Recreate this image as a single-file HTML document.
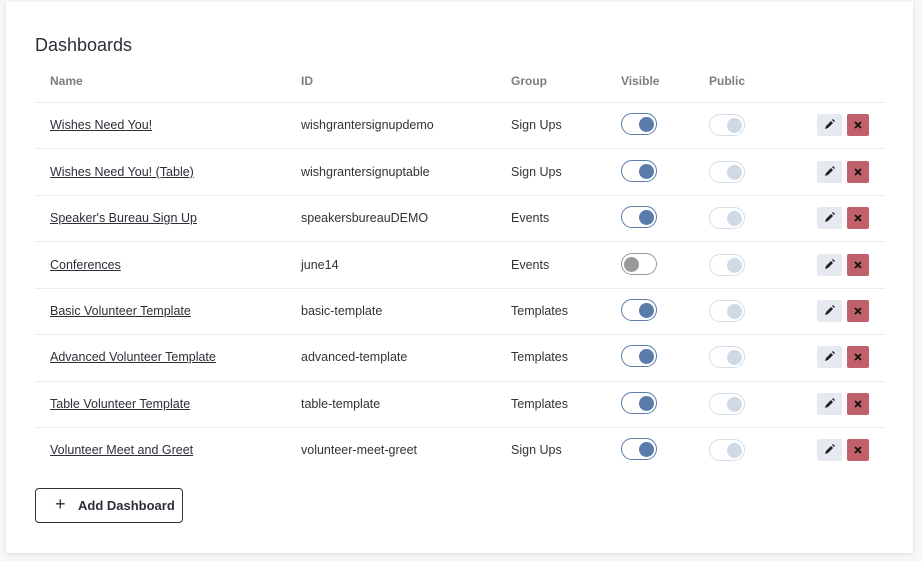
<!DOCTYPE html>
<html><head><style>
body{margin:0;background:#f7f7f7;width:922px;height:561px;overflow:hidden;font-family:"Liberation Sans",sans-serif;}
.card{position:absolute;left:6px;top:2px;width:907px;height:551px;background:#fff;box-shadow:0 1px 4px rgba(0,0,0,.12);}
.ov{background:transparent;box-shadow:none}
h1{position:absolute;left:29px;top:33px;margin:0;font-weight:normal;font-size:18px;color:#2b2f36;}
.hdr{position:absolute;top:72px;font-size:12px;font-weight:bold;color:#7a7d82;}
.line{position:absolute;left:29px;width:850px;height:1px;background:#ececec;}
.cell{position:absolute;font-size:12.5px;color:#333;margin-top:1px}
.name{color:#2b2f36;text-decoration:underline;}
.tg{position:absolute;width:36px;height:22px;border-radius:11px;box-sizing:border-box;margin-top:-1px}
.tg i{position:absolute;top:3px;width:15px;height:15px;border-radius:50%;}
.on{border:1.5px solid #5b7caa;}.on i{right:2px;background:#5b7caa;}
.off{border:1.5px solid #999;}.off i{left:2px;background:#999;}
.pub{border:1.5px solid #d5dde8;}.pub i{right:2px;background:#d0dae5;}
.ed{position:absolute;width:25px;height:22px;background:#e6e9ef;border-radius:2px;}
.dl{position:absolute;width:22px;height:22px;background:#c0606a;border-radius:2px;}
.btn{position:absolute;left:29px;top:486px;width:148px;height:35px;border:1px solid #333;border-radius:4px;box-sizing:border-box;font-size:13px;font-weight:bold;color:#2b2f36;line-height:33px;}
</style></head><body>
<div class="card">
<h1>Dashboards</h1>
<div class="hdr" style="left:44px">Name</div>
<div class="hdr" style="left:295px">ID</div>
<div class="hdr" style="left:505px">Group</div>
<div class="hdr" style="left:615px">Visible</div>
<div class="hdr" style="left:703px">Public</div>
<div class="btn"><span style="position:absolute;left:19px;font-size:18px;font-weight:normal;top:-1px">+</span><span style="position:absolute;left:42px">Add Dashboard</span></div>
</div>
<div class="card ov">
<div class="line" style="top:100px"></div>
<div class="cell name" style="left:44px;top:115px">Wishes Need You!</div><div class="cell" style="left:295px;top:115px">wishgrantersignupdemo</div><div class="cell" style="left:505px;top:115px">Sign Ups</div>
<div class="tg on" style="left:615px;top:112px"><i></i></div><div class="tg pub" style="left:703px;top:113px"><i></i></div>
<div class="ed" style="left:811px;top:112px"><svg width="25" height="22"><path d="M8 15l1-3 5-5 2 2-5 5z M15 6l1-1 2 2-1 1z" fill="#222"/></svg></div><div class="dl" style="left:841px;top:112px"><svg width="22" height="22"><path d="M8 8l6 6M14 8l-6 6" stroke="#111" stroke-width="1.8"/></svg></div>
<div class="line" style="top:146px"></div>
<div class="cell name" style="left:44px;top:162px">Wishes Need You! (Table)</div><div class="cell" style="left:295px;top:162px">wishgrantersignuptable</div><div class="cell" style="left:505px;top:162px">Sign Ups</div>
<div class="tg on" style="left:615px;top:159px"><i></i></div><div class="tg pub" style="left:703px;top:160px"><i></i></div>
<div class="ed" style="left:811px;top:159px"><svg width="25" height="22"><path d="M8 15l1-3 5-5 2 2-5 5z M15 6l1-1 2 2-1 1z" fill="#222"/></svg></div><div class="dl" style="left:841px;top:159px"><svg width="22" height="22"><path d="M8 8l6 6M14 8l-6 6" stroke="#111" stroke-width="1.8"/></svg></div>
<div class="line" style="top:193px"></div>
<div class="cell name" style="left:44px;top:208px">Speaker's Bureau Sign Up</div><div class="cell" style="left:295px;top:208px">speakersbureauDEMO</div><div class="cell" style="left:505px;top:208px">Events</div>
<div class="tg on" style="left:615px;top:205px"><i></i></div><div class="tg pub" style="left:703px;top:206px"><i></i></div>
<div class="ed" style="left:811px;top:205px"><svg width="25" height="22"><path d="M8 15l1-3 5-5 2 2-5 5z M15 6l1-1 2 2-1 1z" fill="#222"/></svg></div><div class="dl" style="left:841px;top:205px"><svg width="22" height="22"><path d="M8 8l6 6M14 8l-6 6" stroke="#111" stroke-width="1.8"/></svg></div>
<div class="line" style="top:239px"></div>
<div class="cell name" style="left:44px;top:255px">Conferences</div><div class="cell" style="left:295px;top:255px">june14</div><div class="cell" style="left:505px;top:255px">Events</div>
<div class="tg off" style="left:615px;top:252px"><i></i></div><div class="tg pub" style="left:703px;top:253px"><i></i></div>
<div class="ed" style="left:811px;top:252px"><svg width="25" height="22"><path d="M8 15l1-3 5-5 2 2-5 5z M15 6l1-1 2 2-1 1z" fill="#222"/></svg></div><div class="dl" style="left:841px;top:252px"><svg width="22" height="22"><path d="M8 8l6 6M14 8l-6 6" stroke="#111" stroke-width="1.8"/></svg></div>
<div class="line" style="top:286px"></div>
<div class="cell name" style="left:44px;top:301px">Basic Volunteer Template</div><div class="cell" style="left:295px;top:301px">basic-template</div><div class="cell" style="left:505px;top:301px">Templates</div>
<div class="tg on" style="left:615px;top:298px"><i></i></div><div class="tg pub" style="left:703px;top:299px"><i></i></div>
<div class="ed" style="left:811px;top:298px"><svg width="25" height="22"><path d="M8 15l1-3 5-5 2 2-5 5z M15 6l1-1 2 2-1 1z" fill="#222"/></svg></div><div class="dl" style="left:841px;top:298px"><svg width="22" height="22"><path d="M8 8l6 6M14 8l-6 6" stroke="#111" stroke-width="1.8"/></svg></div>
<div class="line" style="top:332px"></div>
<div class="cell name" style="left:44px;top:347px">Advanced Volunteer Template</div><div class="cell" style="left:295px;top:347px">advanced-template</div><div class="cell" style="left:505px;top:347px">Templates</div>
<div class="tg on" style="left:615px;top:344px"><i></i></div><div class="tg pub" style="left:703px;top:345px"><i></i></div>
<div class="ed" style="left:811px;top:344px"><svg width="25" height="22"><path d="M8 15l1-3 5-5 2 2-5 5z M15 6l1-1 2 2-1 1z" fill="#222"/></svg></div><div class="dl" style="left:841px;top:344px"><svg width="22" height="22"><path d="M8 8l6 6M14 8l-6 6" stroke="#111" stroke-width="1.8"/></svg></div>
<div class="line" style="top:379px"></div>
<div class="cell name" style="left:44px;top:394px">Table Volunteer Template</div><div class="cell" style="left:295px;top:394px">table-template</div><div class="cell" style="left:505px;top:394px">Templates</div>
<div class="tg on" style="left:615px;top:391px"><i></i></div><div class="tg pub" style="left:703px;top:392px"><i></i></div>
<div class="ed" style="left:811px;top:391px"><svg width="25" height="22"><path d="M8 15l1-3 5-5 2 2-5 5z M15 6l1-1 2 2-1 1z" fill="#222"/></svg></div><div class="dl" style="left:841px;top:391px"><svg width="22" height="22"><path d="M8 8l6 6M14 8l-6 6" stroke="#111" stroke-width="1.8"/></svg></div>
<div class="line" style="top:425px"></div>
<div class="cell name" style="left:44px;top:440px">Volunteer Meet and Greet</div><div class="cell" style="left:295px;top:440px">volunteer-meet-greet</div><div class="cell" style="left:505px;top:440px">Sign Ups</div>
<div class="tg on" style="left:615px;top:437px"><i></i></div><div class="tg pub" style="left:703px;top:438px"><i></i></div>
<div class="ed" style="left:811px;top:437px"><svg width="25" height="22"><path d="M8 15l1-3 5-5 2 2-5 5z M15 6l1-1 2 2-1 1z" fill="#222"/></svg></div><div class="dl" style="left:841px;top:437px"><svg width="22" height="22"><path d="M8 8l6 6M14 8l-6 6" stroke="#111" stroke-width="1.8"/></svg></div>
</div>
</body></html>
